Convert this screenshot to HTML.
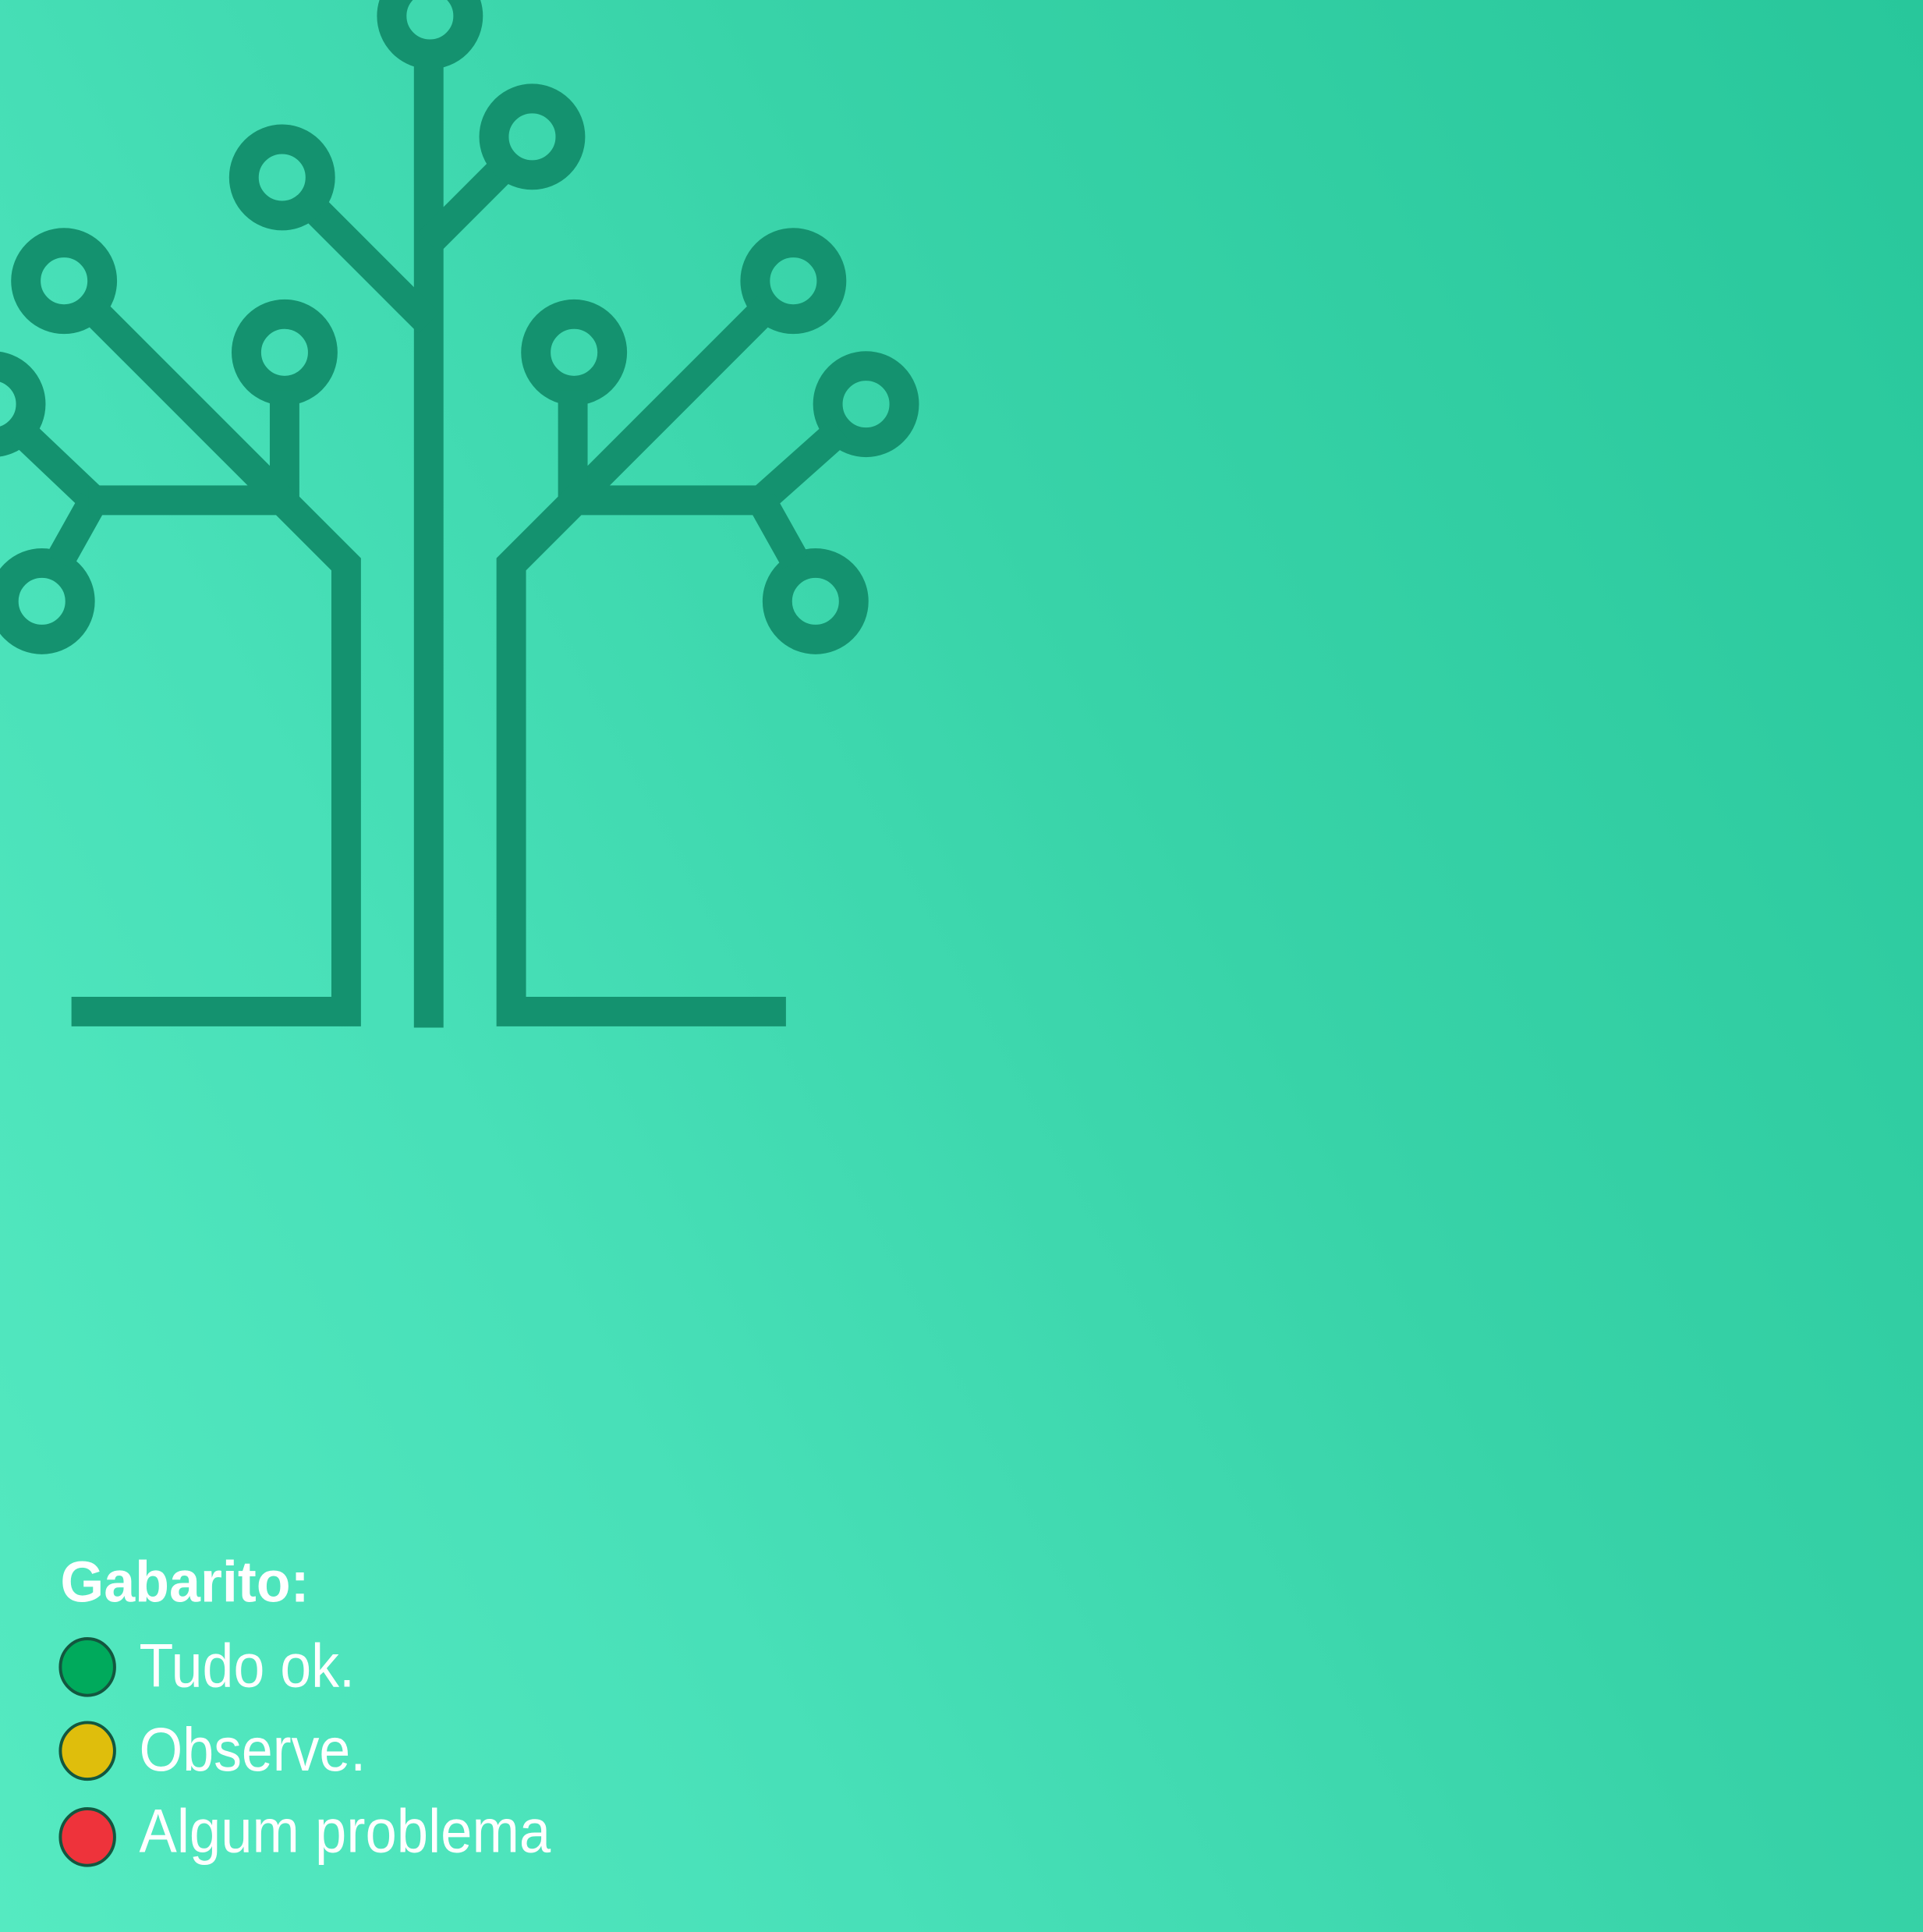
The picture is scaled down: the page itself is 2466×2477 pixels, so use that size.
<!DOCTYPE html>
<html><head><meta charset="utf-8"><style>
html,body{margin:0;padding:0;}
body{width:2466px;height:2477px;overflow:hidden;background:linear-gradient(62deg,#55eac1 0%,#48e0b8 30%,#38d3a8 60%,#28c79b 100%);}
svg{display:block;}
</style></head><body>
<svg width="2466" height="2477" viewBox="0 0 1561 1568" preserveAspectRatio="none">
<g fill="none" stroke="#14926f" stroke-width="24">
<line x1="348" y1="40" x2="348" y2="834"/>
<line x1="348" y1="197" x2="412" y2="133"/>
<line x1="348" y1="262" x2="250" y2="164"/>
<circle cx="349" cy="13" r="31"/>
<circle cx="432" cy="111" r="31"/>
<circle cx="229" cy="144" r="31"/>
<!-- left -->
<circle cx="52" cy="228" r="31"/>
<circle cx="231" cy="286" r="31"/>
<circle cx="-6" cy="328" r="31"/>
<circle cx="34" cy="488" r="31"/>
<line x1="73" y1="249" x2="226" y2="402"/>
<line x1="231" y1="317" x2="231" y2="406"/>
<line x1="16" y1="349" x2="76" y2="406"/>
<line x1="76" y1="406" x2="48" y2="456"/>
<polyline points="72,406 229,406 281,458 281,821 58,821"/>
<!-- right -->
<circle cx="466" cy="286" r="31"/>
<circle cx="644" cy="228" r="31"/>
<circle cx="703" cy="328" r="31"/>
<circle cx="662" cy="488" r="31"/>
<line x1="623" y1="249" x2="470" y2="402"/>
<line x1="465" y1="317" x2="465" y2="406"/>
<line x1="682" y1="349" x2="618" y2="406"/>
<line x1="618" y1="406" x2="646" y2="456"/>
<polyline points="625,406 467,406 415,458 415,821 638,821"/>
</g>
<g font-family="Liberation Sans, Arial, sans-serif" fill="#fff">
<text x="49" y="1300" font-size="47" font-weight="bold" textLength="202" lengthAdjust="spacingAndGlyphs">Gabarito:</text>
<text x="113" y="1369" font-size="50" textLength="175" lengthAdjust="spacingAndGlyphs">Tudo ok.</text>
<text x="113" y="1437" font-size="50" textLength="184" lengthAdjust="spacingAndGlyphs">Observe.</text>
<text x="113" y="1503" font-size="50" textLength="334" lengthAdjust="spacingAndGlyphs">Algum problema</text>
</g>
<g stroke="#13573f" stroke-width="2.5">
<ellipse cx="71" cy="1353" rx="22" ry="23" fill="#00aa5c"/>
<ellipse cx="71" cy="1421" rx="22" ry="23" fill="#dfbe0c"/>
<ellipse cx="71" cy="1491" rx="22" ry="23" fill="#ee333b"/>
</g>
</svg>
</body></html>
